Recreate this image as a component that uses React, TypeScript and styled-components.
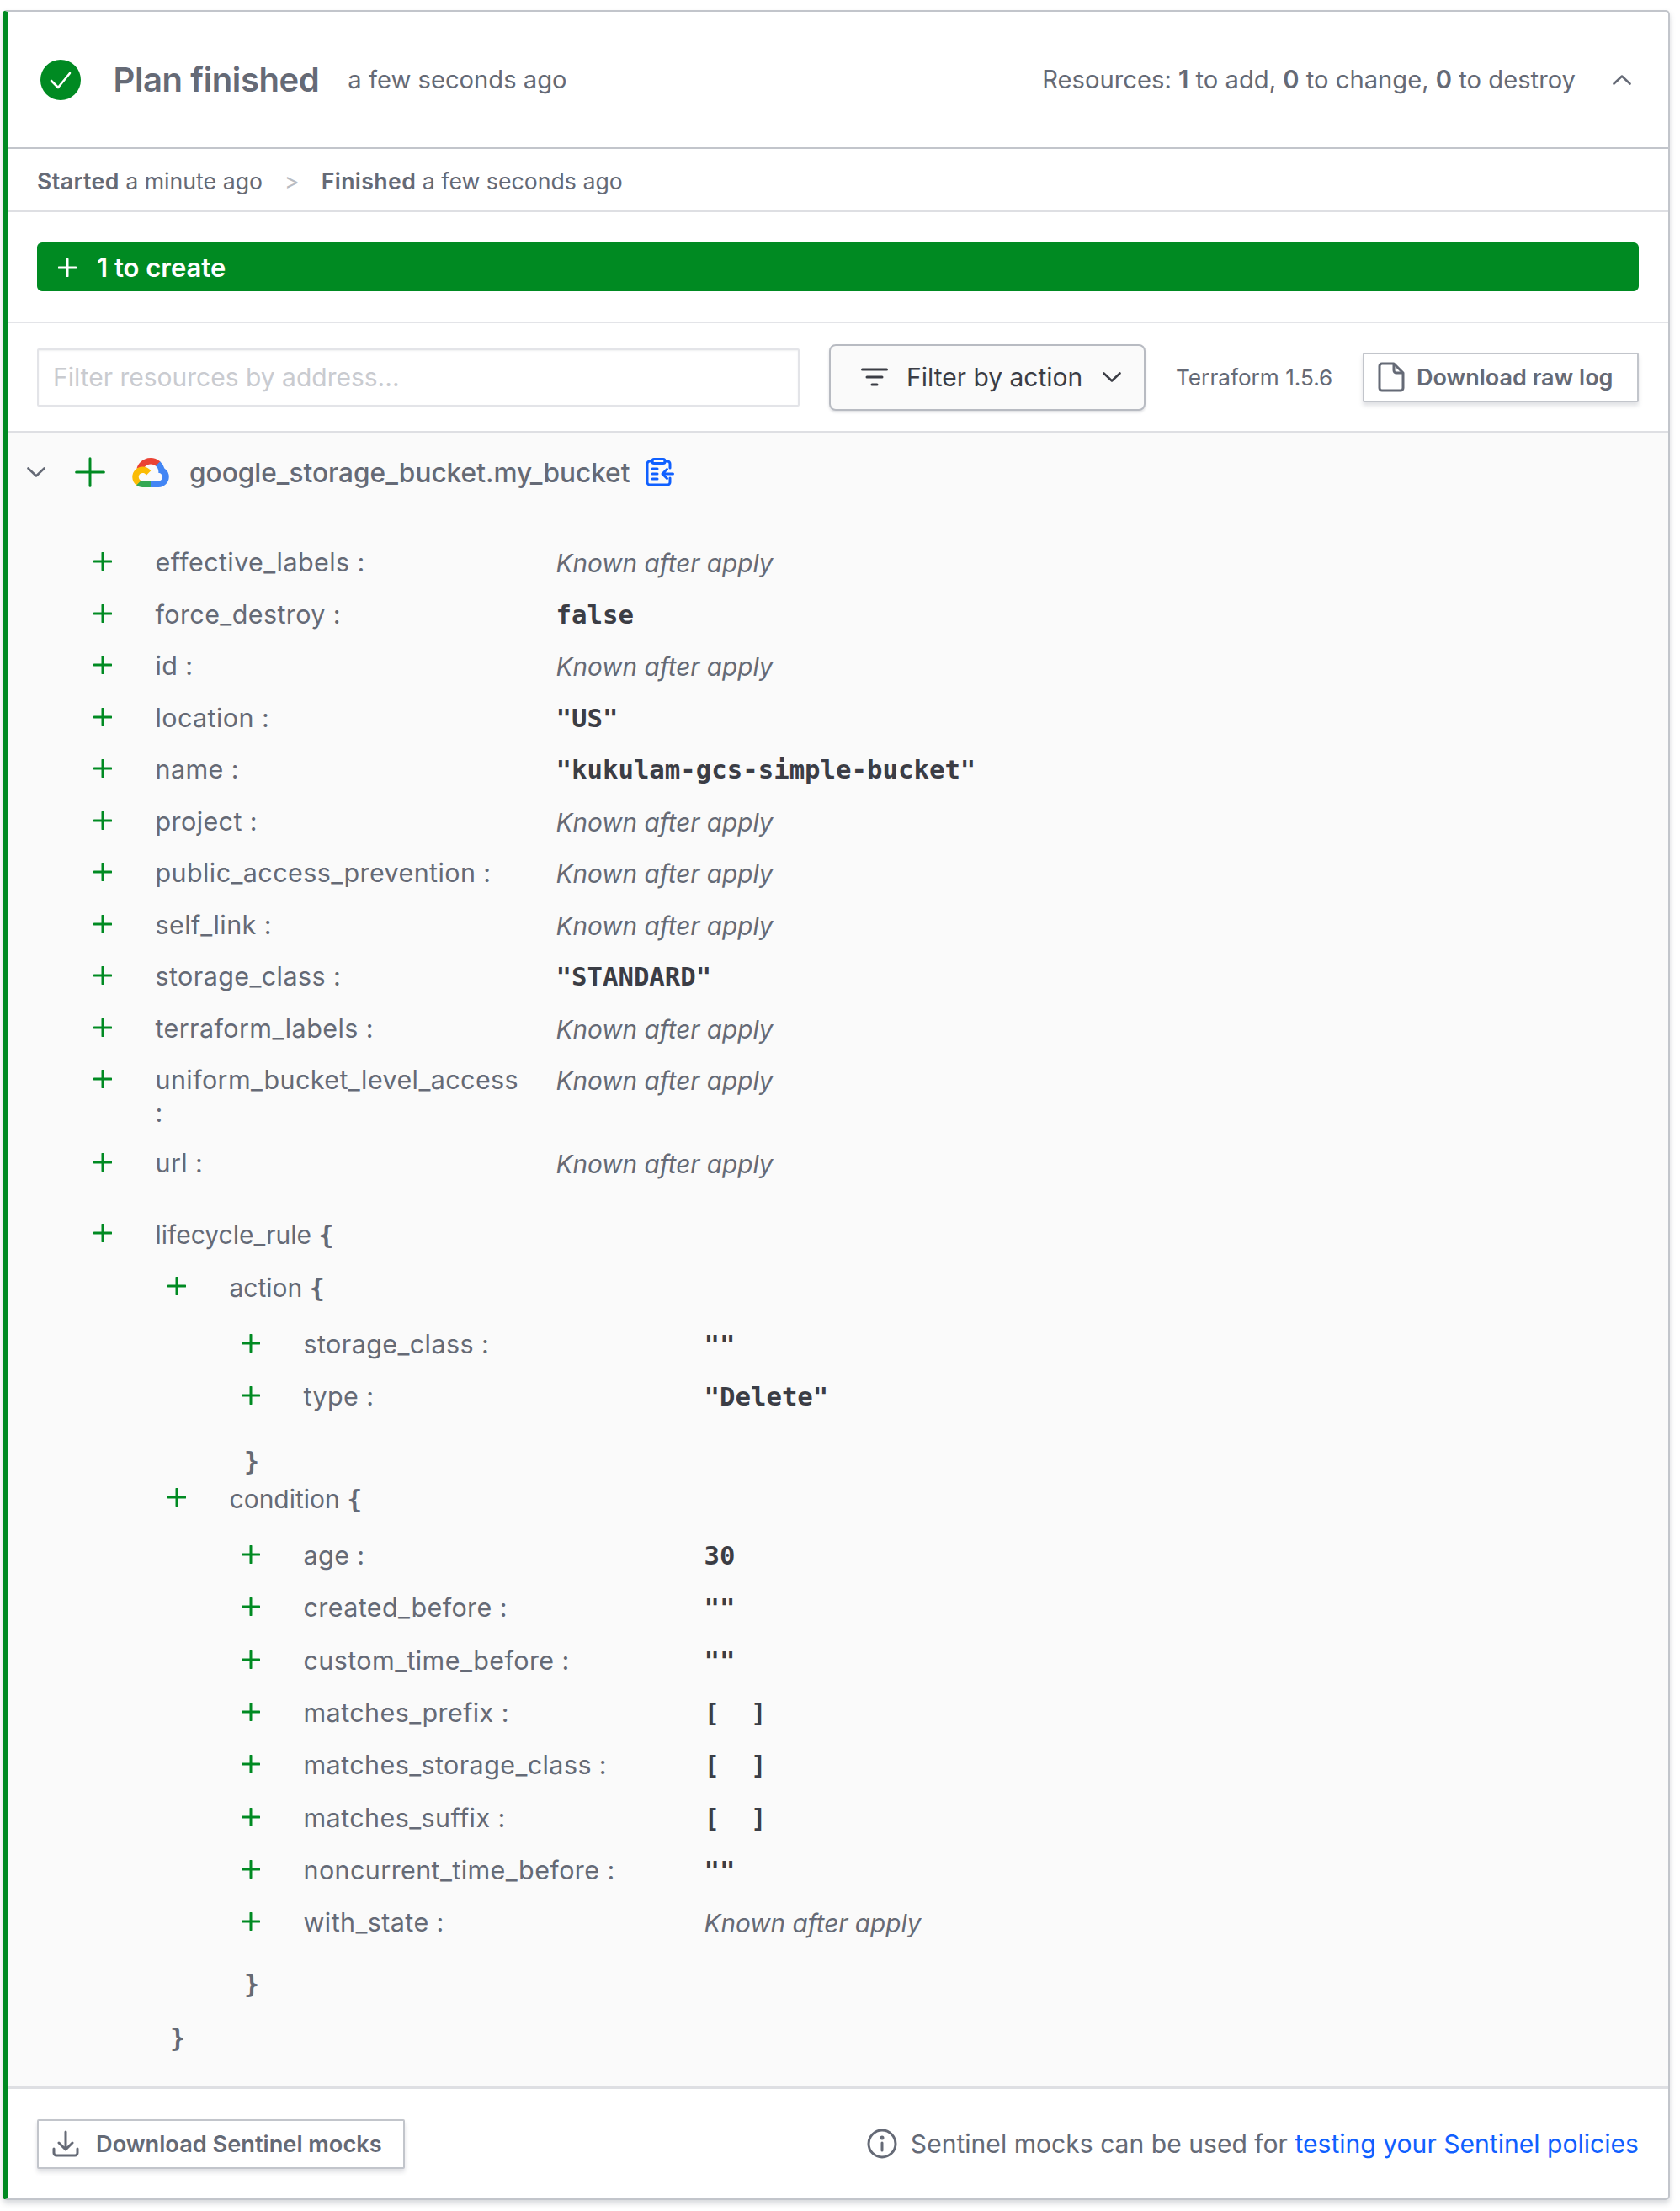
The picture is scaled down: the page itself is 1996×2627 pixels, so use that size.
import styled, { createGlobalStyle } from "styled-components";

const GREEN = "#008a22";
const BLUE = "#1060ff";

const GlobalStyle = createGlobalStyle`
  html, body {
    margin: 0;
    padding: 0;
    background: #fff;
  }
  body {
    font-family: Inter, "Noto Sans", sans-serif;
    color: #656a76;
  }
`;

const Page = styled.div`
  padding: 12px 12px 14px 3px;
`;
const Panel = styled.div`
  border: 2px solid #c2c5cb;
  border-left: 6px solid ${GREEN};
  border-radius: 5px;
  box-shadow: 0 4px 6px rgba(101, 106, 118, 0.25);
`;
const Header = styled.div`
  height: 161px;
  display: flex;
  align-items: center;
  justify-content: space-between;
  padding: 0 44px 0 39px;
  border-bottom: 2px solid #c2c5cb;
`;
const HeaderLeft = styled.div`
  display: flex;
  align-items: center;
`;
const Title = styled.div`
  font-size: 40px;
  font-weight: 600;
  margin-left: 38.5px;
  letter-spacing: -0.4px;
`;
const Ago = styled.div`
  font-size: 29.2px;
  margin-left: 34px;
`;
const HeaderRight = styled.div`
  display: flex;
  align-items: center;
  font-size: 29.2px;
  gap: 44px;
  b {
    font-weight: 600;
  }
`;
const Stats = styled.div`
  height: 75px;
  display: flex;
  align-items: center;
  padding: 2px 0 0 35px;
  box-sizing: border-box;
  font-size: 26.7px;
  border-bottom: 2px solid #dedfe3;
  b {
    font-weight: 600;
    letter-spacing: 0.4px;
  }
`;
const Sep = styled.span`
  color: #b8bbc2;
  margin: 0 26px;
`;
const BarSection = styled.div`
  padding: 36px 35px 36px 35px;
  border-bottom: 2px solid #e3e4e8;
`;
const Bar = styled.div`
  height: 58px;
  border-radius: 6px;
  background: ${GREEN};
  color: #fff;
  display: flex;
  align-items: center;
  gap: 24px;
  padding: 1px 0 0 25px;
  box-sizing: border-box;
  font-size: 31px;
  font-weight: 600;
`;
const Toolbar = styled.div`
  height: 128px;
  display: flex;
  align-items: center;
  padding: 0 35px;
  border-bottom: 2px solid #dedfe3;
`;
const FilterInput = styled.input`
  width: 906px;
  height: 69px;
  box-sizing: border-box;
  border: 2px solid #e3e4e8;
  border-radius: 2px;
  padding: 0 17px;
  font-family: inherit;
  font-size: 30px;
  background: #fff;
  box-shadow: inset 0 1px 2px rgba(101, 106, 118, 0.1);
  &::placeholder {
    color: #c9cbd0;
  }
`;
const FilterSelect = styled.div`
  width: 376px;
  height: 79px;
  box-sizing: border-box;
  margin-left: 35px;
  border: 2px solid #b8bbc2;
  border-radius: 8px;
  background: #fafafa;
  box-shadow: 0 2px 3px rgba(101, 106, 118, 0.2);
  display: flex;
  align-items: center;
  padding: 0 27px 0 36px;
  color: #3b3d45;
  font-size: 30px;
  span {
    flex: 1;
    margin-left: 22px;
  }
`;
const Version = styled.div`
  margin-left: 36px;
  font-size: 26.2px;
  white-space: nowrap;
`;
const OutlineButton = styled.div`
  box-sizing: border-box;
  height: 59px;
  display: flex;
  align-items: center;
  gap: 14px;
  border: 2px solid #c2c5cb;
  border-radius: 2px;
  background: #fff;
  box-shadow: 0 4px 5px rgba(101, 106, 118, 0.2);
  font-size: 27px;
  font-weight: 600;
  white-space: nowrap;
`;
const RawLogButton = styled(OutlineButton)`
  margin-left: auto;
  width: 328px;
  padding-left: 16px;
`;
const Resource = styled.div`
  background: #fafafa;
  padding-bottom: 37px;
  border-bottom: 3px solid #dedfe3;
`;
const ResourceHead = styled.div`
  height: 94px;
  display: flex;
  align-items: center;
  padding-left: 23px;
  font-size: 31.6px;
  font-weight: 500;
`;
const HeadPlus = styled.div`
  display: flex;
  margin: 0 32px 0 35px;
`;
const ResourceName = styled.div`
  margin: 0 19px 0 24px;
`;
const Attributes = styled.div`
  padding-top: 30px;
`;
const Row = styled.div<{ $level: number; $gap?: number; $after?: number }>`
  display: flex;
  padding: 11px 0 ${(p) => (p.$level === 2 ? 11.3 : 10.5)}px ${(p) => 102 + p.$level * 88}px;
  margin-top: ${(p) => p.$gap ?? 0}px;
  margin-bottom: ${(p) => p.$after ?? 0}px;
  font-size: 30px;
  line-height: 40px;
`;
const PlusSlot = styled.div`
  width: 40px;
  height: 40px;
  flex: none;
  display: flex;
  align-items: center;
  justify-content: flex-start;
  position: relative;
  top: -2px;
`;
const Label = styled.div`
  flex: none;
  margin-left: 33.5px;
  width: 476px;
  box-sizing: border-box;
  padding-right: 30px;
  font-size: 30.5px;
  line-height: 38.5px;
  letter-spacing: 0.4px;
`;
const BlockLabel = styled.div`
  margin-left: 33.5px;
  font-size: 30px;
  span {
    font-family: "DejaVu Sans Mono", monospace;
    font-weight: 700;
  }
`;
const Unknown = styled.div`
  font-size: 29.7px;
  font-style: italic;
  color: #656a76;
`;
const Literal = styled.div`
  font-family: "DejaVu Sans Mono", monospace;
  font-weight: 700;
  font-size: 30.7px;
  color: #3b3d45;
  white-space: pre;
`;
const Brace = styled.div<{ $level: number; $gap?: number; $after?: number }>`
  padding-left: ${(p) => 105 + p.$level * 88}px;
  margin-top: ${(p) => p.$gap ?? 0}px;
  margin-bottom: ${(p) => p.$after ?? 0}px;
  font-family: "DejaVu Sans Mono", monospace;
  font-weight: 700;
  font-size: 30px;
  line-height: 40px;
`;
const Footer = styled.div`
  height: 130px;
  display: flex;
  align-items: center;
  justify-content: space-between;
  padding: 0 35px;
`;
const MocksButton = styled(OutlineButton)`
  width: 437px;
  padding-left: 16px;
  gap: 20px;
  font-size: 27.2px;
`;
const Note = styled.div`
  display: flex;
  align-items: center;
  gap: 16px;
  font-size: 30.1px;
  a {
    color: ${BLUE};
    text-decoration: none;
  }
`;

const Plus = ({ size = 22, color = GREEN, stroke = 3 }: { size?: number; color?: string; stroke?: number }) => (
  <svg width={size} height={size} viewBox="0 0 22 22" fill="none" stroke={color} strokeWidth={(stroke * 22) / size} strokeLinecap="round">
    <path d="M11 1v20M1 11h20" />
  </svg>
);

const CheckCircle = () => (
  <svg width="48" height="48" viewBox="0 0 48 48">
    <circle cx="24" cy="24" r="24" fill={GREEN} />
    <path d="M13 25l8 8 14-17" fill="none" stroke="#fff" strokeWidth="2.6" strokeLinecap="round" strokeLinejoin="round" />
  </svg>
);

const Chevron = ({ up, width = 22, color = "#656a76" }: { up?: boolean; width?: number; color?: string }) => (
  <svg width={width} height={(width * 12) / 22} viewBox="0 0 22 12" fill="none" stroke={color} strokeWidth="2.6" strokeLinecap="round" strokeLinejoin="round">
    <path d={up ? "M1.500 10.500L11 1.500l9.500 9" : "M1.500 1.500L11 10.500l9.500-9"} />
  </svg>
);

const FilterIcon = () => (
  <svg width="32" height="24" viewBox="0 0 32 24" fill="none" stroke="#3b3d45" strokeWidth="3" strokeLinecap="round">
    <path d="M1.500 3h29M7 12h18M13 21h6" />
  </svg>
);

const DocIcon = () => (
  <svg width="32" height="36" viewBox="0 0 32 36" fill="none" stroke="#656a76" strokeWidth="3" strokeLinejoin="round">
    <path d="M2 5a3 3 0 0 1 3-3h14l11 11v18a3 3 0 0 1-3 3H5a3 3 0 0 1-3-3z" />
    <path d="M19 2v8a3 3 0 0 0 3 3h8" />
  </svg>
);

const DownloadIcon = () => (
  <svg width="32" height="32" viewBox="0 0 32 32" fill="none" stroke="#656a76" strokeWidth="3" strokeLinecap="round" strokeLinejoin="round">
    <path d="M16 2v20M8 15l8 8 8-8" />
    <path d="M2 22v5a3 3 0 0 0 3 3h22a3 3 0 0 0 3-3v-5" />
  </svg>
);

const InfoIcon = () => (
  <svg width="36" height="36" viewBox="0 0 36 36" fill="none" stroke="#656a76" strokeWidth="3" strokeLinecap="round">
    <circle cx="18" cy="18" r="16" />
    <path d="M18 17v9" />
    <circle cx="18" cy="11" r="1" fill="#656a76" />
  </svg>
);

const GoogleCloud = () => (
  <svg width="44" height="35" viewBox="0 0 256 206">
    <path fill="#EA4335" d="m170.252 56.819 22.253-22.253 1.483-9.37C153.437-11.677 88.976-7.496 52.42 33.92 42.267 45.423 34.734 59.764 30.717 74.573l7.97-1.123 44.505-7.34 3.436-3.513c19.797-21.742 53.27-24.667 76.128-6.168l7.496.39Z" />
    <path fill="#4285F4" d="M224.205 73.918a100.249 100.249 0 0 0-30.217-48.722l-31.232 31.232a55.515 55.515 0 0 1 20.379 44.037v5.544c15.35 0 27.797 12.445 27.797 27.796 0 15.352-12.446 27.485-27.797 27.485h-55.671l-5.466 5.934v33.34l5.466 5.231h55.67c39.93.311 72.553-31.494 72.864-71.424a72.303 72.303 0 0 0-31.793-60.453" />
    <path fill="#34A853" d="M71.87 205.796h55.593V161.29H71.87a27.275 27.275 0 0 1-11.399-2.498l-7.887 2.42-22.409 22.253-1.952 7.574c12.567 9.489 27.9 14.825 43.647 14.757" />
    <path fill="#FBBC05" d="M71.87 61.425C31.94 61.664-.237 94.228.001 134.159c.134 22.298 10.547 43.289 28.222 56.88l32.248-32.247c-13.99-6.321-20.208-22.786-13.887-36.776 6.32-13.99 22.786-20.208 36.775-13.888a27.796 27.796 0 0 1 13.888 13.888l32.248-32.248A72.003 72.003 0 0 0 71.87 61.425" />
  </svg>
);

const RunTaskIcon = () => (
  <svg width="34" height="34" viewBox="0 0 34 34" fill="none" stroke={BLUE} strokeWidth="3" strokeLinecap="round" strokeLinejoin="round">
    <path d="M8 4H5a3 3 0 0 0-3 3v22a3 3 0 0 0 3 3h21a3 3 0 0 0 3-3v-5M29 12V7a3 3 0 0 0-3-3h-3" />
    <rect x="8" y="1.500" width="15" height="5" rx="2" />
    <path d="M8 13h6M8 19h6M8 25h6M32.500 19H20M25.500 13.500L20 19l5.500 5.500" />
  </svg>
);

type Attr = { name: string; value?: string };

const topAttrs: Attr[] = [
  { name: "effective_labels" },
  { name: "force_destroy", value: "false" },
  { name: "id" },
  { name: "location", value: '"US"' },
  { name: "name", value: '"kukulam-gcs-simple-bucket"' },
  { name: "project" },
  { name: "public_access_prevention" },
  { name: "self_link" },
  { name: "storage_class", value: '"STANDARD"' },
  { name: "terraform_labels" },
  { name: "uniform_bucket_level_access" },
  { name: "url" },
];

const actionAttrs: Attr[] = [
  { name: "storage_class", value: '""' },
  { name: "type", value: '"Delete"' },
];

const conditionAttrs: Attr[] = [
  { name: "age", value: "30" },
  { name: "created_before", value: '""' },
  { name: "custom_time_before", value: '""' },
  { name: "matches_prefix", value: "[  ]" },
  { name: "matches_storage_class", value: "[  ]" },
  { name: "matches_suffix", value: "[  ]" },
  { name: "noncurrent_time_before", value: '""' },
  { name: "with_state" },
];

const AttrRow = ({ attr, level }: { attr: Attr; level: number }) => (
  <Row $level={level}>
    <PlusSlot>
      <Plus />
    </PlusSlot>
    <Label>{attr.name} :</Label>
    {attr.value ? <Literal>{attr.value}</Literal> : <Unknown>Known after apply</Unknown>}
  </Row>
);

const BlockRow = ({ name, level, gap, after }: { name: string; level: number; gap?: number; after?: number }) => (
  <Row $level={level} $gap={gap} $after={after}>
    <PlusSlot>
      <Plus />
    </PlusSlot>
    <BlockLabel>
      {name} <span>{"{"}</span>
    </BlockLabel>
  </Row>
);

const App = () => {
  return (
    <Page>
      <GlobalStyle />
      <Panel>
        <Header>
          <HeaderLeft>
            <CheckCircle />
            <Title>Plan finished</Title>
            <Ago>a few seconds ago</Ago>
          </HeaderLeft>
          <HeaderRight>
            <div>
              Resources: <b>1</b> to add, <b>0</b> to change, <b>0</b> to destroy
            </div>
            <Chevron up />
          </HeaderRight>
        </Header>
        <Stats>
          <div>
            <b>Started</b> a minute ago
          </div>
          <Sep>&gt;</Sep>
          <div>
            <b>Finished</b> a few seconds ago
          </div>
        </Stats>
        <BarSection>
          <Bar>
            <Plus color="#fff" size={22} />
            1 to create
          </Bar>
        </BarSection>
        <Toolbar>
          <FilterInput placeholder="Filter resources by address..." />
          <FilterSelect>
            <FilterIcon />
            <span>Filter by action</span>
            <Chevron color="#3b3d45" />
          </FilterSelect>
          <Version>Terraform 1.5.6</Version>
          <RawLogButton>
            <DocIcon />
            Download raw log
          </RawLogButton>
        </Toolbar>
        <Resource>
          <ResourceHead>
            <Chevron />
            <HeadPlus>
              <Plus size={36} stroke={3} />
            </HeadPlus>
            <GoogleCloud />
            <ResourceName>google_storage_bucket.my_bucket</ResourceName>
            <RunTaskIcon />
          </ResourceHead>
          <Attributes>
            {topAttrs.map((attr) => (
              <AttrRow key={attr.name} attr={attr} level={0} />
            ))}
            <BlockRow name="lifecycle_rule" level={0} gap={23} />
            <BlockRow name="action" level={1} after={6} />
            {actionAttrs.map((attr) => (
              <AttrRow key={attr.name} attr={attr} level={2} />
            ))}
            <Brace $level={2} $gap={25} $after={-7}>
              {"}"}
            </Brace>
            <BlockRow name="condition" level={1} after={6} />
            {conditionAttrs.map((attr) => (
              <AttrRow key={attr.name} attr={attr} level={2} />
            ))}
            <Brace $level={2} $gap={22}>
              {"}"}
            </Brace>
            <Brace $level={1} $gap={24}>
              {"}"}
            </Brace>
          </Attributes>
        </Resource>
        <Footer>
          <MocksButton>
            <DownloadIcon />
            Download Sentinel mocks
          </MocksButton>
          <Note>
            <InfoIcon />
            <div>
              Sentinel mocks can be used for <a href="#">testing your Sentinel policies</a>
            </div>
          </Note>
        </Footer>
      </Panel>
    </Page>
  );
};

export default App;
